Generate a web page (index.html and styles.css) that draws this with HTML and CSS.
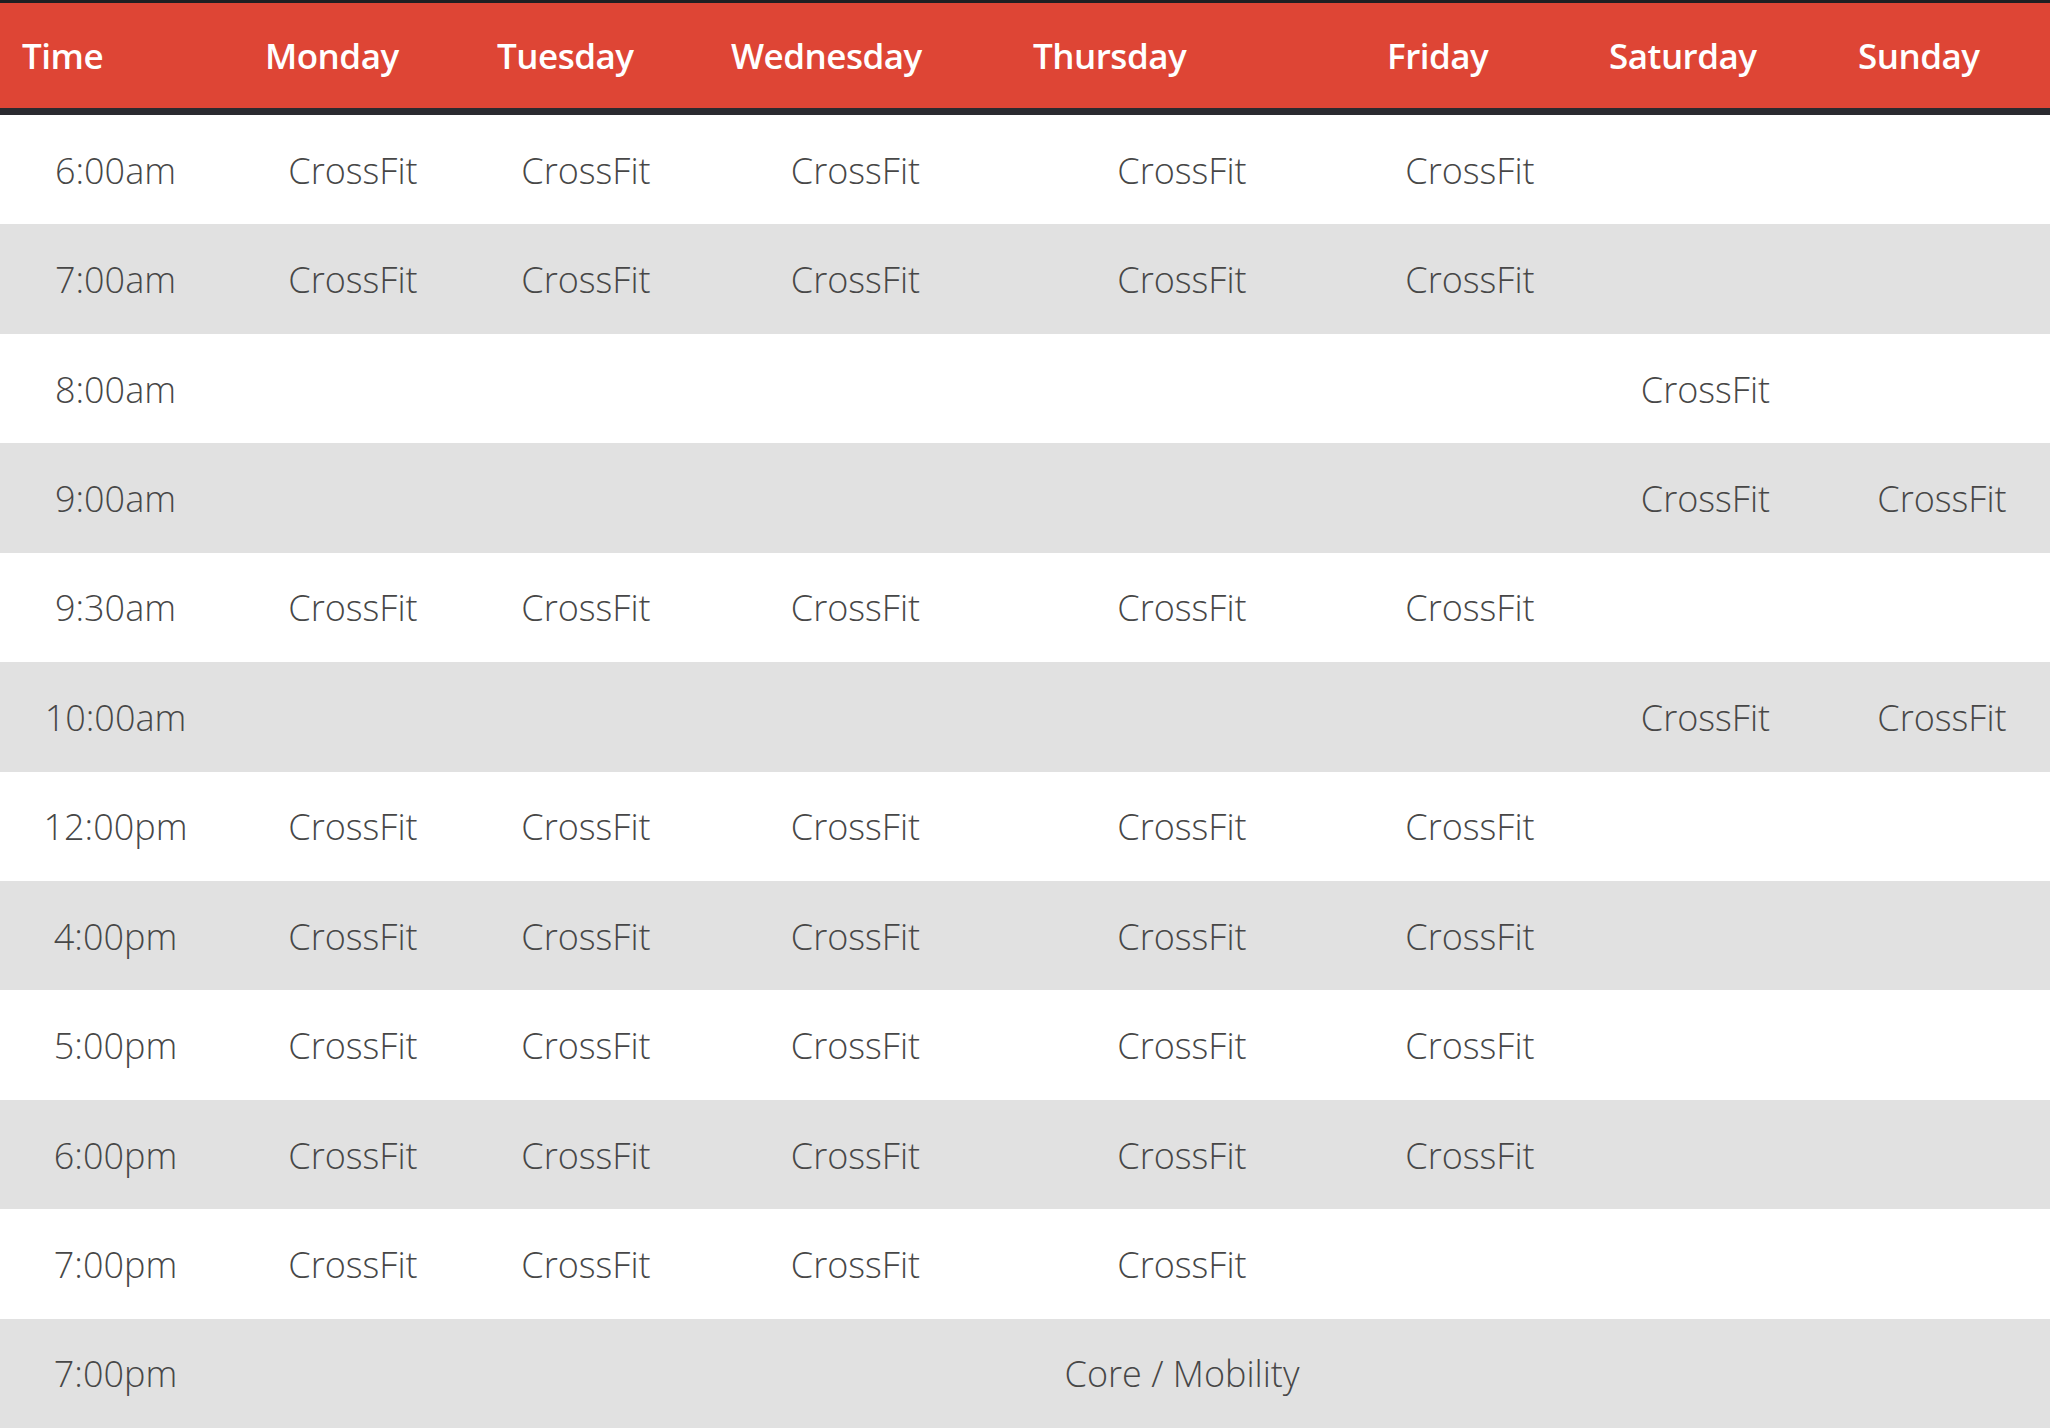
FILE: index.html
```html
<!DOCTYPE html>
<html>
<head>
<meta charset="utf-8">
<link rel="stylesheet" href="styles.css">
</head>
<body>
<div class="schedule">
  <div class="row head">
    <div class="th">Time</div><div class="th">Monday</div><div class="th">Tuesday</div><div class="th">Wednesday</div><div class="th">Thursday</div><div class="th">Friday</div><div class="th">Saturday</div><div class="th">Sunday</div>
  </div>
  <div class="body">
    <div class="row"><div class="td">6:00am</div><div class="td">CrossFit</div><div class="td">CrossFit</div><div class="td">CrossFit</div><div class="td">CrossFit</div><div class="td">CrossFit</div><div class="td"></div><div class="td"></div></div>
    <div class="row"><div class="td">7:00am</div><div class="td">CrossFit</div><div class="td">CrossFit</div><div class="td">CrossFit</div><div class="td">CrossFit</div><div class="td">CrossFit</div><div class="td"></div><div class="td"></div></div>
    <div class="row"><div class="td">8:00am</div><div class="td"></div><div class="td"></div><div class="td"></div><div class="td"></div><div class="td"></div><div class="td">CrossFit</div><div class="td"></div></div>
    <div class="row"><div class="td">9:00am</div><div class="td"></div><div class="td"></div><div class="td"></div><div class="td"></div><div class="td"></div><div class="td">CrossFit</div><div class="td">CrossFit</div></div>
    <div class="row"><div class="td">9:30am</div><div class="td">CrossFit</div><div class="td">CrossFit</div><div class="td">CrossFit</div><div class="td">CrossFit</div><div class="td">CrossFit</div><div class="td"></div><div class="td"></div></div>
    <div class="row"><div class="td">10:00am</div><div class="td"></div><div class="td"></div><div class="td"></div><div class="td"></div><div class="td"></div><div class="td">CrossFit</div><div class="td">CrossFit</div></div>
    <div class="row"><div class="td">12:00pm</div><div class="td">CrossFit</div><div class="td">CrossFit</div><div class="td">CrossFit</div><div class="td">CrossFit</div><div class="td">CrossFit</div><div class="td"></div><div class="td"></div></div>
    <div class="row"><div class="td">4:00pm</div><div class="td">CrossFit</div><div class="td">CrossFit</div><div class="td">CrossFit</div><div class="td">CrossFit</div><div class="td">CrossFit</div><div class="td"></div><div class="td"></div></div>
    <div class="row"><div class="td">5:00pm</div><div class="td">CrossFit</div><div class="td">CrossFit</div><div class="td">CrossFit</div><div class="td">CrossFit</div><div class="td">CrossFit</div><div class="td"></div><div class="td"></div></div>
    <div class="row"><div class="td">6:00pm</div><div class="td">CrossFit</div><div class="td">CrossFit</div><div class="td">CrossFit</div><div class="td">CrossFit</div><div class="td">CrossFit</div><div class="td"></div><div class="td"></div></div>
    <div class="row"><div class="td">7:00pm</div><div class="td">CrossFit</div><div class="td">CrossFit</div><div class="td">CrossFit</div><div class="td">CrossFit</div><div class="td"></div><div class="td"></div><div class="td"></div></div>
    <div class="row"><div class="td">7:00pm</div><div class="td"></div><div class="td"></div><div class="td"></div><div class="td">Core / Mobility</div><div class="td"></div><div class="td"></div><div class="td"></div></div>
  </div>
</div>
</body>
</html>
```
FILE: styles.css
```css
html, body {
  margin: 0;
  padding: 0;
  background: #ffffff;
  overflow: hidden;
}
.schedule {
  width: 2050px;
  height: 1428px;
  display: flex;
  flex-direction: column;
  font-family: "Open Sans", "Liberation Sans", sans-serif;
}
.row {
  display: grid;
  grid-template-columns: 243px 232px 234px 302px 354px 222px 249px 214px;
  align-items: center;
}
.head {
  flex: 0 0 auto;
  height: 105px;
  background: #de4535;
  border-top: 3px solid #1f1f22;
  border-bottom: 7px solid #2a2a2f;
}
.th {
  padding-left: 22px;
  color: #ffffff;
  font-size: 35px;
  font-weight: 600;
  letter-spacing: -0.5px;
  line-height: 1;
}
.body {
  flex: 1 1 auto;
  display: flex;
  flex-direction: column;
}
.body .row {
  flex: 1 1 0;
}
.body .row:nth-child(even) {
  background: #e1e1e1;
}
.td {
  padding-right: 12px;
  text-align: center;
  color: #474747;
  font-size: 36px;
  font-weight: 300;
  line-height: 1;
  padding-top: 2px;
}
.td:nth-child(4) {
  padding-right: 9px;
}
.td:nth-child(8) {
  padding-right: 2px;
}
```
